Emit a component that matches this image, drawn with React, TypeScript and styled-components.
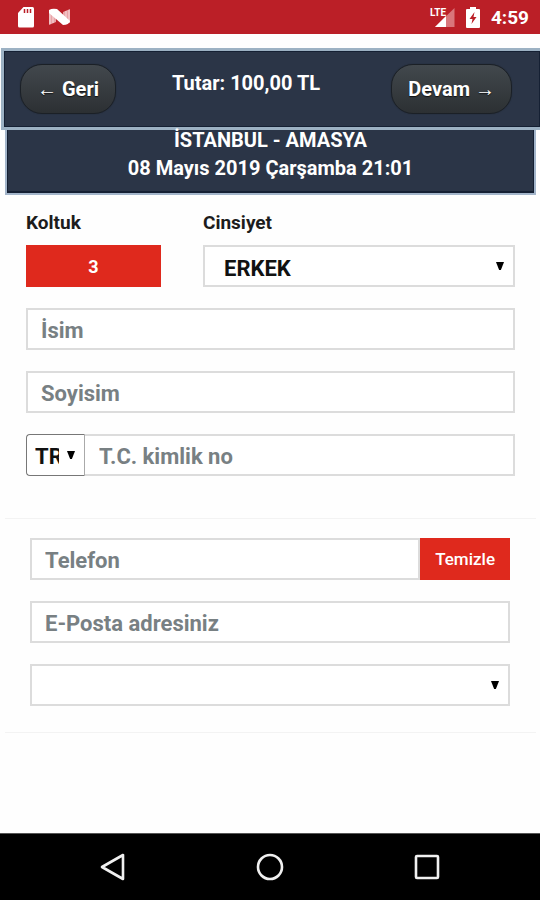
import React from "react";
import styled, { createGlobalStyle } from "styled-components";

const GlobalStyle = createGlobalStyle`
  *, *::before, *::after { box-sizing: border-box; }
  body { margin: 0; background: #fff; }
  body, button, input, select { font-family: Roboto, "Liberation Sans", sans-serif; }
`;

const Screen = styled.div`
  min-height: 100vh;
  display: flex;
  flex-direction: column;
  background: #fefefe;
  color: #1c1c1c;
`;

const StatusBar = styled.header`
  height: 34px;
  padding: 0 11px 0 18px;
  display: flex;
  align-items: center;
  justify-content: space-between;
  background: #bb1f27;
  color: #fff;
`;

const StatusGroup = styled.div<{ $gap: number }>`
  display: flex;
  align-items: center;
  gap: ${(p) => p.$gap}px;
`;

const Clock = styled.time`
  font-size: 19px;
  line-height: 22px;
  font-weight: 700;
  padding-top: 2px;
`;

const Content = styled.main`
  flex: 1;
  padding-top: 14px;
`;

const TopBar = styled.section`
  height: 82px;
  padding: 13px 28px 0 16px;
  margin-left: 1px;
  display: grid;
  grid-template-columns: 1fr auto 1fr;
  align-items: start;
  background: #2b3547;
  border: 3px solid #9cb1c3;
  border-right: 0;
  box-shadow: inset 0 0 0 1px #152033;
`;

const PillButton = styled.button<{ $end?: boolean }>`
  justify-self: ${(p) => (p.$end ? "end" : "start")};
  height: 50px;
  padding: 0 16px 1px;
  border: 1px solid #1b2026;
  border-radius: 22px;
  background: linear-gradient(#42484d, #2c3033);
  box-shadow: 0 0 1px #1b2026;
  color: #fff;
  font-size: 20px;
  font-weight: 700;
  text-shadow: 0 1px 1px #111;
`;

const Total = styled.strong`
  padding: 7px 40px 0 0;
  color: #fff;
  font-size: 20px;
  line-height: 24px;
  font-weight: 700;
`;

const Trip = styled.section`
  height: 65px;
  margin: 0 4px 0 5px;
  display: flex;
  flex-direction: column;
  align-items: center;
  justify-content: flex-end;
  padding-bottom: 11px;
  background: #2b3547;
  border: 2px solid #a3b5ca;
  border-top: 0;
  box-shadow: inset 0 -1px 0 1px #152033;
  color: #fff;
  font-size: 20px;
  line-height: 28px;
  font-weight: 700;
`;

const Panel = styled.section<{ $left: number; $right: number; $top: number; $bottom: number }>`
  margin: 0 4px 0 5px;
  padding: ${(p) => p.$top}px ${(p) => p.$right}px ${(p) => p.$bottom}px ${(p) => p.$left}px;
  display: flex;
  flex-direction: column;
  gap: 21px;
  border-bottom: 1px solid #f3f3f3;
`;

const SeatRow = styled.div`
  display: grid;
  grid-template-columns: 135px 1fr;
  column-gap: 42px;
`;

const Column = styled.div`
  display: flex;
  flex-direction: column;
  gap: 10px;
`;

const Label = styled.label`
  font-size: 19px;
  line-height: 24px;
  font-weight: 700;
`;

const RedButton = styled.button<{ $bold?: boolean }>`
  height: 42px;
  padding: 0 15px;
  border: 0;
  background: #df291d;
  color: #fff;
  font-size: ${(p) => (p.$bold ? 18 : 17)}px;
  font-weight: ${(p) => (p.$bold ? 700 : 500)};
`;

const FieldRow = styled.div`
  display: flex;
`;

const TextInput = styled.input`
  flex: 1;
  width: 100%;
  min-width: 0;
  min-height: 42px;
  height: 42px;
  padding: 2px 13px 0;
  border: 2px solid #dcdcdc;
  border-radius: 0;
  background: #fff;
  color: #111;
  font-size: 22px;
  font-weight: 700;
  &::placeholder { color: #788083; opacity: 1; }
`;

const CodeInput = styled(TextInput)`
  border-left: 0;
  padding-left: 14px;
`;

const SelectBox = styled.div<{ $code?: boolean }>`
  position: relative;
  width: ${(p) => (p.$code ? "59px" : "100%")};
  height: 42px;
  flex: none;
  border: ${(p) => (p.$code ? "1px solid #777" : "2px solid #dcdcdc")};
  border-right-color: ${(p) => (p.$code ? "#aaa" : "#dcdcdc")};
  border-radius: ${(p) => (p.$code ? "4px 0 0 4px" : "0")};
  background: #fff;
`;

const Select = styled.select<{ $code?: boolean }>`
  appearance: none;
  width: ${(p) => (p.$code ? "32px" : "100%")};
  height: 100%;
  padding: ${(p) => (p.$code ? "2px 0 0 8px" : "4px 32px 0 19px")};
  border: 0;
  background: transparent;
  color: #111;
  font-size: 22px;
  font-weight: 700;
  text-overflow: clip;
`;

const Caret = styled.svg`
  position: absolute;
  right: 9px;
  top: calc(50% - 4px);
  width: 8px;
  height: 8px;
  pointer-events: none;
`;

const NavBar = styled.nav`
  height: 67px;
  padding: 0 100px;
  display: flex;
  align-items: center;
  justify-content: space-between;
  background: #000;
  border-top: 1px solid #555;
`;

const NavButton = styled.button`
  padding: 0;
  border: 0;
  background: none;
  display: flex;
  svg { fill: none; stroke: #f0f0f0; stroke-width: 2.6; stroke-linejoin: round; }
`;

function DownCaret() {
  return (
    <Caret viewBox="0 0 9 9" aria-hidden="true">
      <path d="M0 0h9L5.500 9h-2z" fill="#000" />
    </Caret>
  );
}

export default function App() {
  return (
    <>
      <GlobalStyle />
      <Screen>
        <StatusBar>
          <StatusGroup $gap={15}>
            <svg width="16" height="21" viewBox="0 0 16 21" aria-hidden="true">
              <path d="M5.500 0H14.500Q16 0 16 1.500V19Q16 20.500 14.500 20.500H1.500Q0 20.500 0 19V6z" fill="#fff" />
              <path d="M6.500 2v4M9.500 2v4M12.500 2v4" stroke="#bb1f27" strokeWidth="1.500" />
            </svg>
            <svg width="21" height="18" viewBox="0 0 21 18" aria-hidden="true">
              <path d="M0 3L7 6V14L0 17zM14 4L21 1V15L14 12z" fill="#e9a3a7" />
              <path d="M1 5v11M4 5v10M17 3v11M20 2v12" stroke="#f7dcdd" strokeWidth="1" />
              <path d="M0 2Q3 0 8 1L21 13Q20 17 14 17L0 5z" fill="#fff" />
            </svg>
          </StatusGroup>
          <StatusGroup $gap={11}>
            <svg width="26" height="22" viewBox="0 0 26 22" aria-hidden="true">
              <path d="M25.500 2V21H6z" fill="#d9767b" />
              <path d="M17 10V21H6z" fill="#fff" />
              <text x="1" y="10" fill="#fff" fontSize="10" fontWeight="700" fontFamily="'Liberation Sans Narrow', Roboto, sans-serif">LTE</text>
            </svg>
            <svg width="14" height="21" viewBox="0 0 14 21" aria-hidden="true">
              <path d="M4 0h6v2h3q1 0 1 1v17q0 1-1 1H1q-1 0-1-1V3q0-1 1-1h3z" fill="#fff" />
              <path d="M8.500 5L3.500 12H6.500L5.500 17L10.500 10H7.500z" fill="#bb1f27" />
            </svg>
            <Clock>4:59</Clock>
          </StatusGroup>
        </StatusBar>

        <Content>
          <TopBar>
            <PillButton type="button">← Geri</PillButton>
            <Total>Tutar: 100,00 TL</Total>
            <PillButton type="button" $end>Devam →</PillButton>
          </TopBar>
          <Trip>
            <div>İSTANBUL - AMASYA</div>
            <div>08 Mayıs 2019 Çarşamba 21:01</div>
          </Trip>

          <Panel $left={21} $right={21} $top={16} $bottom={42}>
            <SeatRow>
              <Column>
                <Label htmlFor="seat">Koltuk</Label>
                <RedButton id="seat" type="button" $bold>3</RedButton>
              </Column>
              <Column>
                <Label htmlFor="gender">Cinsiyet</Label>
                <SelectBox>
                  <Select id="gender" defaultValue="ERKEK">
                    <option>ERKEK</option>
                    <option>KADIN</option>
                  </Select>
                  <DownCaret />
                </SelectBox>
              </Column>
            </SeatRow>
            <TextInput aria-label="İsim" placeholder="İsim" />
            <TextInput aria-label="Soyisim" placeholder="Soyisim" />
            <FieldRow>
              <SelectBox $code>
                <Select $code aria-label="Uyruk" defaultValue="TR">
                  <option>TR</option>
                </Select>
                <DownCaret />
              </SelectBox>
              <CodeInput aria-label="T.C. kimlik no" placeholder="T.C. kimlik no" />
            </FieldRow>
          </Panel>

          <Panel $left={25} $right={26} $top={19} $bottom={26}>
            <FieldRow>
              <TextInput type="tel" aria-label="Telefon" placeholder="Telefon" />
              <RedButton type="button">Temizle</RedButton>
            </FieldRow>
            <TextInput type="email" aria-label="E-Posta adresiniz" placeholder="E-Posta adresiniz" />
            <SelectBox>
              <Select aria-label="Seçim" defaultValue="">
                <option value=""></option>
              </Select>
              <DownCaret />
            </SelectBox>
          </Panel>
        </Content>

        <NavBar>
          <NavButton type="button" aria-label="Geri dön">
            <svg width="26" height="30" viewBox="0 0 26 30"><path d="M23 3V27L2 15z" /></svg>
          </NavButton>
          <NavButton type="button" aria-label="Ana ekran">
            <svg width="28" height="28" viewBox="0 0 28 28"><circle cx="14" cy="14" r="12" /></svg>
          </NavButton>
          <NavButton type="button" aria-label="Son uygulamalar">
            <svg width="26" height="26" viewBox="0 0 26 26"><rect x="2" y="2" width="22" height="22" rx="1" /></svg>
          </NavButton>
        </NavBar>
      </Screen>
    </>
  );
}
